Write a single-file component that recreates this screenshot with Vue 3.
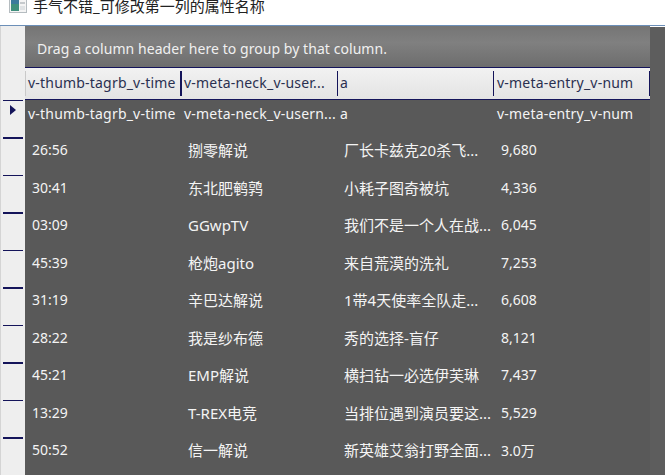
<script setup>
const rows = [
  ['26:56', '捌零解说', '厂长卡兹克20杀飞...', '9,680'],
  ['30:41', '东北肥鹌鹑', '小耗子图奇被坑', '4,336'],
  ['03:09', 'GGwpTV', '我们不是一个人在战...', '6,045'],
  ['45:39', '枪炮agito', '来自荒漠的洗礼', '7,253'],
  ['31:19', '辛巴达解说', '1带4天使率全队走...', '6,608'],
  ['28:22', '我是纱布德', '秀的选择-盲仔', '8,121'],
  ['45:21', 'EMP解说', '横扫钻一必选伊芙琳', '7,437'],
  ['13:29', 'T-REX电竞', '当排位遇到演员要这...', '5,529'],
  ['50:52', '信一解说', '新英雄艾翁打野全面...', '3.0万'],
]
const headers = ['v-thumb-tagrb_v-time', 'v-meta-neck_v-user...', 'a', 'v-meta-entry_v-num']
const first = ['v-thumb-tagrb_v-time', 'v-meta-neck_v-usern...', 'a', 'v-meta-entry_v-num']
</script>

<template>
  <div class="window">
    <div class="titlebar">
      <svg class="appicon" width="18" height="14" viewBox="0 0 18 14">
        <rect x="0.5" y="-0.5" width="17" height="13" fill="#f4f4f4" stroke="#b5bcc0" />
        <rect x="2" y="0" width="8" height="11" fill="#3f8f7c" />
        <rect x="2" y="0" width="8" height="4" fill="#3b7a9c" />
        <rect x="11" y="2" width="5" height="2" fill="#c5c9cc" />
        <rect x="11" y="6" width="5" height="4" fill="#dfe2e4" />
      </svg>
      <span class="title">手气不错_可修改第一列的属性名称</span>
    </div>
    <div class="content">
      <div class="indicator">
        <div class="ind-top"></div>
        <div class="ind-cell"><span class="arrow"></span></div>
        <div v-for="r in rows" :key="r[0]" class="ind-cell"></div>
      </div>
      <div class="grid">
        <div class="group">Drag a column header here to group by that column.</div>
        <div class="header">
          <div v-for="h in headers" :key="h" class="hcell">{{ h }}</div>
        </div>
        <div class="row firstrow">
          <div v-for="c in first" :key="c" class="cell">{{ c }}</div>
        </div>
        <div v-for="r in rows" :key="r[0]" class="row datarow">
          <div v-for="(c, i) in r" :key="i" class="cell">{{ c }}</div>
        </div>
      </div>
      <div class="side"></div>
    </div>
  </div>
</template>

<style>
html, body { margin: 0; background: #fff; }
</style>

<style scoped>
.window {
  width: 665px;
  height: 475px;
  overflow: hidden;
  display: flex;
  flex-direction: column;
  font-family: "Noto Sans", "Noto Sans CJK SC", sans-serif;
  background: #fff;
}
.titlebar {
  height: 25px;
  flex: none;
  display: flex;
  align-items: flex-start;
  padding-left: 9px;
  gap: 6px;
  border-bottom: 1px solid #6c8fb8;
}
.appicon { flex: none; }
.title {
  font-size: 15px;
  line-height: 13px;
  color: #222;
  white-space: nowrap;
}
.content {
  flex: 1;
  display: grid;
  grid-template-columns: 25px 625px 15px;
  min-height: 0;
}
.indicator {
  background: #eeeeee;
  border-left: 1px solid #d4d4d4;
  box-sizing: border-box;
  padding: 0 2px;
  overflow: hidden;
}
.ind-top { height: 74px; }
.ind-cell {
  height: 36px;
  border-top: 1px solid #14145a;
  position: relative;
}
.ind-cell:nth-child(odd) { border-top-width: 2px; }
.arrow {
  position: absolute;
  left: 7px;
  top: 4px;
  width: 0;
  height: 0;
  border-left: 6px solid #14145a;
  border-top: 5.5px solid transparent;
  border-bottom: 5.5px solid transparent;
}
.grid {
  background: #595959;
  display: flex;
  flex-direction: column;
  min-width: 0;
}
.group {
  height: 41px;
  flex: none;
  box-sizing: border-box;
  background: linear-gradient(#757575, #808080 40%, #6d6d6d);
  color: #f0f0f0;
  font-size: 14px;
  letter-spacing: 0.06px;
  line-height: 46px;
  padding-left: 12px;
}
.header {
  height: 33px;
  flex: none;
  box-sizing: border-box;
  display: grid;
  grid-template-columns: 157px 156px 156px 156px;
  background: linear-gradient(#f2f2f2, #e3e3e3);
  border-top: 1px solid #14145a;
  border-bottom: 1px solid #14145a;
  align-items: center;
}
.hcell {
  height: 25px;
  line-height: 23px;
  font-size: 14px;
  letter-spacing: 0.2px;
  color: #2a3050;
  padding-left: 2px;
  border-right: 1px solid #14145a;
  white-space: nowrap;
  overflow: hidden;
  box-sizing: border-box;
}
.hcell:nth-child(1) { border-left: 1px solid #c9c9c9; border-right-width: 2px; }
.hcell:nth-child(4) { padding-left: 3px; }
.row {
  display: grid;
  grid-template-columns: 156px 156px 157px 156px;
  color: #f4f4f4;
  font-size: 14px;
  align-items: center;
  white-space: nowrap;
}
.firstrow { height: 26px; margin-bottom: 5px; flex: none; letter-spacing: 0.2px; }
.firstrow .cell { padding-left: 3px; }
.datarow { height: 37.5px; flex: none; }
.datarow .cell { padding-left: 7px; }
.datarow .cell:nth-child(2), .datarow .cell:nth-child(3) { font-size: 15px; }
.cell { overflow: hidden; }
.side { background: #5d5d5d; margin-top: 1px; }
</style>
